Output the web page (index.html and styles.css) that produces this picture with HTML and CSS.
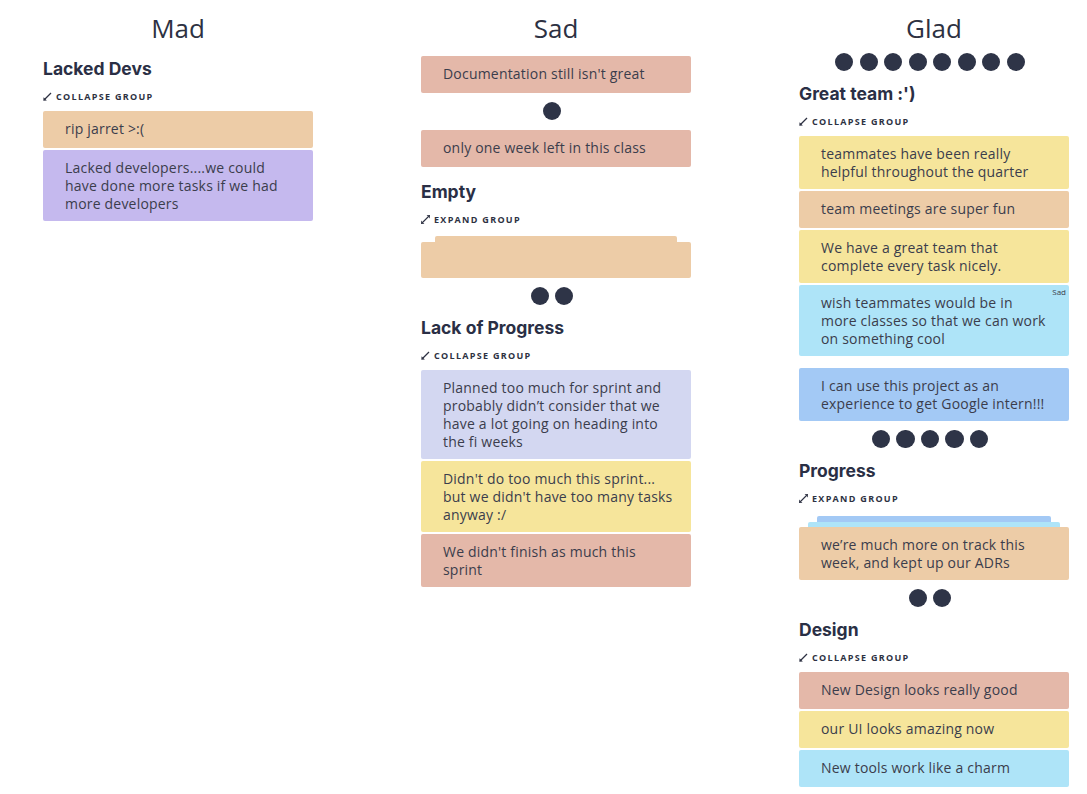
FILE: index.html
```html
<!DOCTYPE html>
<html lang="en">
<head>
<meta charset="utf-8">
<title>Retro board</title>
<link rel="stylesheet" href="styles.css">
</head>
<body>
<div class="board">
  <section class="column">
    <h2 class="column-title">Mad</h2>
    <div class="column-body">
      <div class="item group">
        <h3 class="group-title">Lacked Devs</h3>
        <div class="group-toggle">
          <svg class="toggle-icon" viewBox="0 0 9 9" width="9" height="9"><path d="M1.5 7.5 L8 1" stroke="#2d3142" stroke-width="1.2" fill="none"/><path d="M0.3 8.7 L0.6 5.2 L3.8 8.4 Z" fill="#2d3142"/></svg>
          <span>COLLAPSE GROUP</span>
        </div>
        <div class="cards">
          <div class="card peach">rip jarret &gt;:(</div>
          <div class="card purple">Lacked developers....we could have done more tasks if we had more developers</div>
        </div>
      </div>
    </div>
  </section>

  <section class="column">
    <h2 class="column-title">Sad</h2>
    <div class="column-body">
      <div class="item card salmon">Documentation still isn't great</div>
      <div class="dots"><span class="dot"></span></div>
      <div class="item card salmon">only one week left in this class</div>
      <div class="item group">
        <h3 class="group-title">Empty</h3>
        <div class="group-toggle">
          <svg class="toggle-icon" viewBox="0 0 9 9" width="9" height="9"><path d="M2 7 L7 2" stroke="#2d3142" stroke-width="1.1" fill="none"/><path d="M0 9 L0.3 5.6 L3.4 8.7 Z" fill="#2d3142"/><path d="M9 0 L8.7 3.4 L5.6 0.3 Z" fill="#2d3142"/></svg>
          <span>EXPAND GROUP</span>
        </div>
        <div class="stack">
          <div class="stack-layer empty-back peach"></div>
          <div class="card peach blank"></div>
        </div>
      </div>
      <div class="dots"><span class="dot"></span><span class="dot"></span></div>
      <div class="item group">
        <h3 class="group-title">Lack of Progress</h3>
        <div class="group-toggle">
          <svg class="toggle-icon" viewBox="0 0 9 9" width="9" height="9"><path d="M1.5 7.5 L8 1" stroke="#2d3142" stroke-width="1.2" fill="none"/><path d="M0.3 8.7 L0.6 5.2 L3.8 8.4 Z" fill="#2d3142"/></svg>
          <span>COLLAPSE GROUP</span>
        </div>
        <div class="cards">
          <div class="card lavender">Planned too much for sprint and probably didn’t consider that we have a lot going on heading into the fi weeks</div>
          <div class="card yellow">Didn't do too much this sprint... but we didn't have too many tasks anyway :/</div>
          <div class="card salmon">We didn't finish as much this sprint</div>
        </div>
      </div>
    </div>
  </section>

  <section class="column">
    <h2 class="column-title">Glad</h2>
    <div class="column-body">
      <div class="dots"><span class="dot"></span><span class="dot"></span><span class="dot"></span><span class="dot"></span><span class="dot"></span><span class="dot"></span><span class="dot"></span><span class="dot"></span></div>
      <div class="item group">
        <h3 class="group-title">Great team :')</h3>
        <div class="group-toggle">
          <svg class="toggle-icon" viewBox="0 0 9 9" width="9" height="9"><path d="M1.5 7.5 L8 1" stroke="#2d3142" stroke-width="1.2" fill="none"/><path d="M0.3 8.7 L0.6 5.2 L3.8 8.4 Z" fill="#2d3142"/></svg>
          <span>COLLAPSE GROUP</span>
        </div>
        <div class="cards">
          <div class="card yellow">teammates have been really helpful throughout the quarter</div>
          <div class="card peach">team meetings are super fun</div>
          <div class="card yellow">We have a great team that complete every task nicely.</div>
          <div class="card skyblue"><span class="tag">Sad</span>wish teammates would be in more classes so that we can work on something cool</div>
        </div>
      </div>
      <div class="item card blue">I can use this project as an experience to get Google intern!!!</div>
      <div class="dots"><span class="dot"></span><span class="dot"></span><span class="dot"></span><span class="dot"></span><span class="dot"></span></div>
      <div class="item group">
        <h3 class="group-title">Progress</h3>
        <div class="group-toggle">
          <svg class="toggle-icon" viewBox="0 0 9 9" width="9" height="9"><path d="M2 7 L7 2" stroke="#2d3142" stroke-width="1.1" fill="none"/><path d="M0 9 L0.3 5.6 L3.4 8.7 Z" fill="#2d3142"/><path d="M9 0 L8.7 3.4 L5.6 0.3 Z" fill="#2d3142"/></svg>
          <span>EXPAND GROUP</span>
        </div>
        <div class="stack stack-deep">
          <div class="stack-layer far-back blue"></div>
          <div class="stack-layer mid-back skyblue"></div>
          <div class="card peach">we’re much more on track this week, and kept up our ADRs</div>
        </div>
      </div>
      <div class="dots"><span class="dot"></span><span class="dot"></span></div>
      <div class="item group">
        <h3 class="group-title">Design</h3>
        <div class="group-toggle">
          <svg class="toggle-icon" viewBox="0 0 9 9" width="9" height="9"><path d="M1.5 7.5 L8 1" stroke="#2d3142" stroke-width="1.2" fill="none"/><path d="M0.3 8.7 L0.6 5.2 L3.8 8.4 Z" fill="#2d3142"/></svg>
          <span>COLLAPSE GROUP</span>
        </div>
        <div class="cards">
          <div class="card salmon">New Design looks really good</div>
          <div class="card yellow">our UI looks amazing now</div>
          <div class="card skyblue">New tools work like a charm</div>
        </div>
      </div>
    </div>
  </section>
</div>
</body>
</html>
```

FILE: styles.css
```css
* { box-sizing: border-box; }

html, body {
  margin: 0;
  padding: 0;
  background: #ffffff;
}

body {
  font-family: "Open Sans", "Liberation Sans", sans-serif;
  color: #3b3d4c;
}

.board {
  display: flex;
  gap: 108px;
  padding-left: 43px;
}

.column {
  width: 270px;
  display: flex;
  flex-direction: column;
}

.column-title {
  margin: 0;
  height: 44px;
  padding-top: 10px;
  font-size: 26px;
  line-height: 36px;
  font-weight: 400;
  text-align: center;
  color: #2d3142;
}

.column-body {
  display: flex;
  flex-direction: column;
}

.item {
  margin-top: 12px;
}

.dots + .item {
  margin-top: 0;
}

.group {
  display: flex;
  flex-direction: column;
}

.dots {
  height: 37px;
  display: flex;
  justify-content: center;
  align-items: center;
  gap: 6.2px;
  padding-right: 8px;
  padding-bottom: 1px;
}

.dot {
  width: 18.3px;
  height: 18.3px;
  border-radius: 50%;
  background: #2e3447;
}

.group-title {
  margin: 0;
  font-family: "Inter", "Lato", sans-serif;
  font-size: 17.5px;
  font-weight: 700;
  line-height: 25px;
  color: #2a2f45;
}

.group-toggle {
  display: flex;
  align-items: center;
  gap: 4px;
  margin-top: 8px;
  height: 14px;
  margin-bottom: 8px;
  font-size: 9px;
  font-weight: 700;
  letter-spacing: 1.3px;
  color: #2d3142;
}

.toggle-icon {
  width: 9px;
  height: 9px;
  flex: none;
}

.cards {
  display: flex;
  flex-direction: column;
  gap: 2px;
}

.card {
  position: relative;
  width: 270px;
  min-height: 37px;
  padding: 8.5px 17px 8.5px 22px;
  font-size: 14px;
  line-height: 18px;
  letter-spacing: 0.2px;
  border-radius: 2px;
  color: #3b3d4c;
}

.card.blank {
  min-height: 36px;
}

.stack {
  display: flex;
  flex-direction: column;
  align-items: center;
  margin-top: 2px;
}

.stack-deep {
  margin-top: 3px;
}

.stack-layer {
  height: 6px;
  border-radius: 2px 2px 0 0;
}

.empty-back {
  width: 242px;
}

.far-back {
  width: 234px;
}

.mid-back {
  width: 252px;
  height: 5px;
}

.tag {
  float: right;
  position: relative;
  top: -7px;
  width: 30px;
  margin-right: -14px;
  text-align: right;
  font-size: 8px;
  line-height: 10px;
  letter-spacing: 0;
  color: #3b3d4c;
}

.peach { background: #edcca7; }
.purple { background: #c5b9ee; }
.salmon { background: #e4b8a9; }
.lavender { background: #d3d7f1; }
.yellow { background: #f6e59b; }
.skyblue { background: #aee4f8; }
.blue { background: #a3c9f5; }
```
